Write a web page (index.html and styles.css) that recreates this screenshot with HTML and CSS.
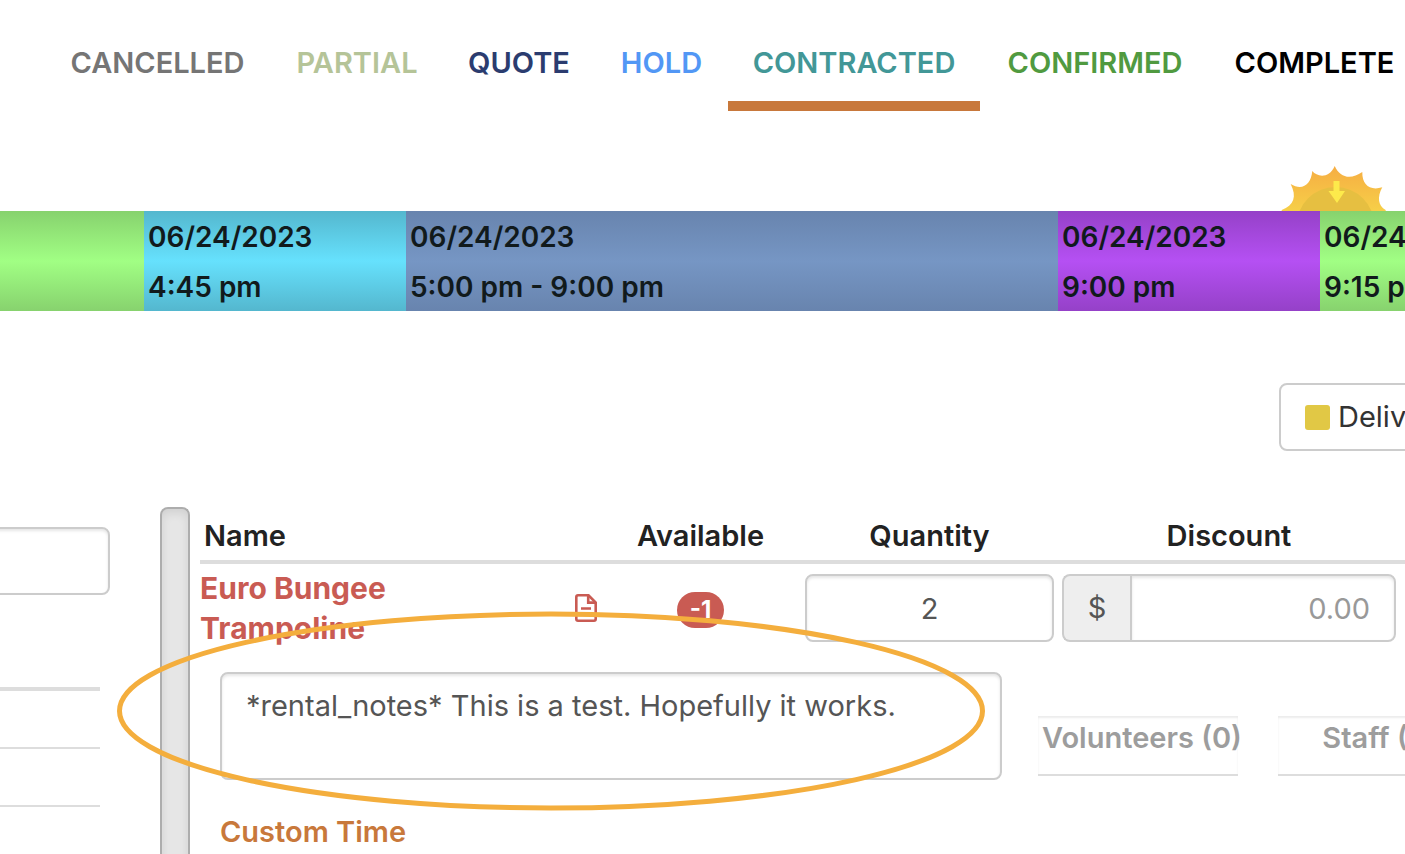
FILE: index.html
```html
<!DOCTYPE html>
<html lang="en">
<head>
<meta charset="utf-8">
<title>Event details</title>
<link rel="stylesheet" href="styles.css">
</head>
<body>
<div class="page">
  <nav class="tabs" aria-label="Status">
    <a href="#" class="tab cancelled">CANCELLED</a>
    <a href="#" class="tab partial">PARTIAL</a>
    <a href="#" class="tab quote">QUOTE</a>
    <a href="#" class="tab hold">HOLD</a>
    <a href="#" class="tab contracted" aria-current="page">CONTRACTED</a>
    <a href="#" class="tab confirmed">CONFIRMED</a>
    <a href="#" class="tab complete">COMPLETE</a>
  </nav>

  <div class="daylight">
    <svg class="sun" width="110" height="45" viewBox="0 0 110 45" aria-hidden="true">
      <defs>
        <linearGradient id="sunfill" x1="0" y1="0" x2="0" y2="1">
          <stop offset="0" stop-color="#f6ad43"/>
          <stop offset="1" stop-color="#f6cf48"/>
        </linearGradient>
      </defs>
      <path fill="url(#sunfill)" d="M1.7 45V44C14 39 17 31 10.7 18C22 25 31 19 32.3 5C37 11 49 13 54.7 0C60 12 71 14 82.3 6C82 19 90 25 102.3 21.3C97 31 98 40 105.7 44V45Z"/>
      <circle cx="55.5" cy="60" r="39" fill="#e6bf41"/>
      <path fill="#fdea4b" d="M53.5 15h6v10h5.500L57 37 48.500 25h5Z"/>
    </svg>
  </div>

  <div class="timeline">
    <div class="slot green"></div>
    <div class="slot cyan">06/24/2023<br>4:45 pm</div>
    <div class="slot blue">06/24/2023<br>5:00 pm - 9:00 pm</div>
    <div class="slot purple">06/24/2023<br>9:00 pm</div>
    <div class="slot green">06/24/2023<br>9:15 pm</div>
  </div>

  <div class="toolbar">
    <button type="button" class="delivery"><span class="swatch"></span>Delivery</button>
  </div>

  <div class="content">
    <aside class="side">
      <input class="field side-field" type="text" aria-label="Search">
      <div class="side-rows">
        <div class="side-row"></div>
        <div class="side-row"></div>
        <div class="side-row"></div>
      </div>
    </aside>
    <div class="divider"></div>
    <main class="main">
      <table class="items">
        <colgroup>
          <col><col class="col-icon"><col class="col-available"><col class="col-quantity"><col class="col-discount">
        </colgroup>
        <thead>
          <tr>
            <th class="name" colspan="2">Name</th>
            <th>Available</th>
            <th>Quantity</th>
            <th class="discount">Discount</th>
          </tr>
        </thead>
        <tbody>
          <tr>
            <td><a href="#" class="item-link">Euro Bungee Trampoline</a></td>
            <td>
              <button type="button" class="doc" aria-label="Notes">
                <svg width="22" height="28" viewBox="0 0 22 28" fill="none" stroke="#c95b53" stroke-width="2.600" aria-hidden="true">
                  <path d="M3 1.300H13.500L20.700 8.500V25Q20.700 26.700 19 26.700H3Q1.300 26.700 1.300 25V3Q1.300 1.300 3 1.300Z"/>
                  <path d="M13.200 1.500V8.600H20.500M6 14.500H16M6 20H16"/>
                </svg>
              </button>
            </td>
            <td class="center"><span class="badge">-1</span></td>
            <td class="quantity"><input class="field number" type="text" value="2" aria-label="Quantity"></td>
            <td class="discount">
              <div class="money">
                <span class="unit">$</span>
                <input class="field amount" type="text" placeholder="0.00" aria-label="Discount">
              </div>
            </td>
          </tr>
        </tbody>
      </table>

      <div class="details">
        <textarea class="field notes" aria-label="Rental notes">*rental_notes* This is a test. Hopefully it works.</textarea>
        <button type="button" class="people">Volunteers (0)</button>
        <button type="button" class="people">Staff (0)</button>
      </div>
      <a href="#" class="custom-time">Custom Time</a>

      <svg class="highlight" width="868" height="200" viewBox="0 0 868 200" fill="none" aria-hidden="true">
        <ellipse cx="434" cy="100" rx="431.500" ry="97" stroke="#f4ae3d" stroke-width="5"/>
      </svg>
    </main>
  </div>
</div>
</body>
</html>
```

FILE: styles.css
```css
* {
  box-sizing: border-box;
}

body {
  margin: 0;
  background: #fff;
  color: #222;
  font-family: Inter, "Liberation Sans", sans-serif;
  font-size: 29px;
  line-height: 40px;
}

a {
  text-decoration: none;
}

button,
input,
textarea {
  font: inherit;
}

.page {
  display: flex;
  flex-direction: column;
  height: 100vh;
  overflow: hidden;
}

/* Status tabs */
.tabs {
  display: grid;
  grid-template-columns: 227fr 172fr 152fr 133fr 252fr 230fr 209fr;
  flex: none;
  margin: 0 -14px 0 44px;
}

.tab {
  padding: 43px 0 18px;
  border-bottom: 10px solid transparent;
  font-weight: 600;
  text-align: center;
  white-space: nowrap;
}

.cancelled { color: #757575; }
.partial { color: #b5c498; }
.quote { color: #2b3c6f; }
.hold { color: #5297f5; }
.contracted { color: #429797; border-color: #c8783b; }
.confirmed { color: #509a40; }
.complete { color: #000; }

/* Timeline */
.daylight {
  display: flex;
  flex: none;
  align-items: flex-end;
  justify-content: flex-end;
  height: 100px;
  padding-right: 15px;
}

.timeline {
  display: grid;
  grid-template-columns:
    minmax(0, 144fr) minmax(0, 262fr) minmax(0, 652fr)
    minmax(0, 262fr) minmax(0, 85fr);
  flex: none;
}

.slot {
  height: 100px;
  padding: 1px 0 0 4px;
  overflow: hidden;
  color: #111a1c;
  font-size: 28px;
  font-weight: 600;
  line-height: 50px;
  white-space: nowrap;
}

.green { background: linear-gradient(#87d26e, #a1ff84, #87d26e); }
.cyan { background: linear-gradient(#54b7ce, #66e1fd, #54b7ce); }
.blue { background: linear-gradient(#6884ae, #7696c4, #6884ae); }
.purple { background: linear-gradient(#9541c8, #b550f3, #9541c8); }

/* Legend button */
.toolbar {
  display: flex;
  flex: none;
  justify-content: flex-end;
  margin-top: 72px;
  margin-right: -76px;
}

.delivery {
  display: flex;
  align-items: center;
  gap: 8px;
  width: 202px;
  height: 68px;
  padding: 0 24px;
  border: 2px solid #ccc;
  border-radius: 8px;
  background: #fff;
  color: #333;
}

.swatch {
  flex: none;
  width: 25px;
  height: 25px;
  border-radius: 3px;
  background: #e1c845;
}

/* Columns */
.content {
  display: grid;
  grid-template-columns: 110px 50px 30px 10px minmax(0, 1fr);
  flex: 1;
  min-height: 0;
  margin-top: 56px;
}

.field {
  display: block;
  width: 100%;
  height: 68px;
  padding: 0 24px;
  border: 2px solid #ccc;
  border-radius: 8px;
  background: #fff;
  box-shadow: inset 0 2px 3px #0000001a;
  color: #555;
  outline: none;
}

.side {
  padding-top: 20px;
}

.side-field {
  width: 122px;
  margin-left: -12px;
}

.side-rows {
  margin: 92px 10px 0 0;
}

.side-row {
  height: 58px;
  border-top: 2px solid #ddd;
}

.side-row:first-child {
  height: 60px;
  border-top-width: 4px;
}

.divider {
  grid-column: 3;
  border: 2px solid #adadad;
  border-bottom: 0;
  border-radius: 8px 8px 0 0;
  background: #e6e6e6;
  box-shadow: inset 0 4px 10px #00000018;
}

.main {
  position: relative;
  grid-column: 5;
}

/* Item table */
.items {
  width: 100%;
  border-collapse: separate;
  border-spacing: 0;
  table-layout: fixed;
}

.col-icon { width: 28px; }
.col-available { width: 201px; }
.col-quantity { width: 257px; }
.col-discount { width: 347px; }

.items th {
  height: 57px;
  padding: 9px 0 4px;
  border-bottom: 4px solid #ddd;
  font-weight: 600;
  text-align: center;
}

.items th.name {
  padding-left: 4px;
  text-align: left;
}

.items td {
  padding: 4px 0 6px;
}

.items .discount {
  padding-right: 9px;
  padding-left: 4px;
}

.items .quantity {
  padding-right: 4px;
  padding-left: 4px;
}

.item-link {
  display: block;
  padding-right: 100px;
  color: #c95b53;
  font-size: 30px;
  font-weight: 700;
}

.doc {
  display: block;
  margin-left: 3px;
  padding: 0;
  border: 0;
  background: none;
  line-height: 0;
}

.center {
  text-align: center;
}

.badge {
  display: inline-block;
  padding: 0 13px;
  border-radius: 18px;
  background: #c95b53;
  color: #fff;
  font-size: 24px;
  font-weight: 700;
  line-height: 36px;
}

.number {
  text-align: center;
}

.money {
  display: flex;
}

.unit {
  flex: none;
  width: 68px;
  border: 2px solid #ccc;
  border-right: 0;
  border-radius: 8px 0 0 8px;
  background: #eee;
  color: #555;
  line-height: 64px;
  text-align: center;
}

.amount {
  flex: 1;
  min-width: 0;
  border-radius: 0 8px 8px 0;
  text-align: right;
}

.amount::placeholder {
  color: #999;
  opacity: 1;
}

/* Notes and crew */
.details {
  display: flex;
  align-items: flex-end;
  gap: 40px;
  margin: 18px 0 0 20px;
}

.notes {
  flex: none;
  width: 782px;
  height: 108px;
  margin-right: -4px;
  padding: 12px 24px;
  overflow: hidden;
  resize: none;
}

.people {
  flex: none;
  width: 200px;
  height: 60px;
  margin-bottom: 4px;
  padding: 0 0 14px 4px;
  border: solid #ddd;
  border-width: 0 0 2px;
  background: #fff;
  box-shadow: inset 0 2px 2px #00000014;
  color: #9d9d9d;
  font-weight: 600;
  white-space: nowrap;
}

.custom-time {
  display: block;
  margin: 32px 0 0 20px;
  color: #c8783b;
  font-weight: 600;
}

/* Ring drawn over the notes */
.highlight {
  position: absolute;
  top: 104px;
  left: -83px;
  pointer-events: none;
}
```
